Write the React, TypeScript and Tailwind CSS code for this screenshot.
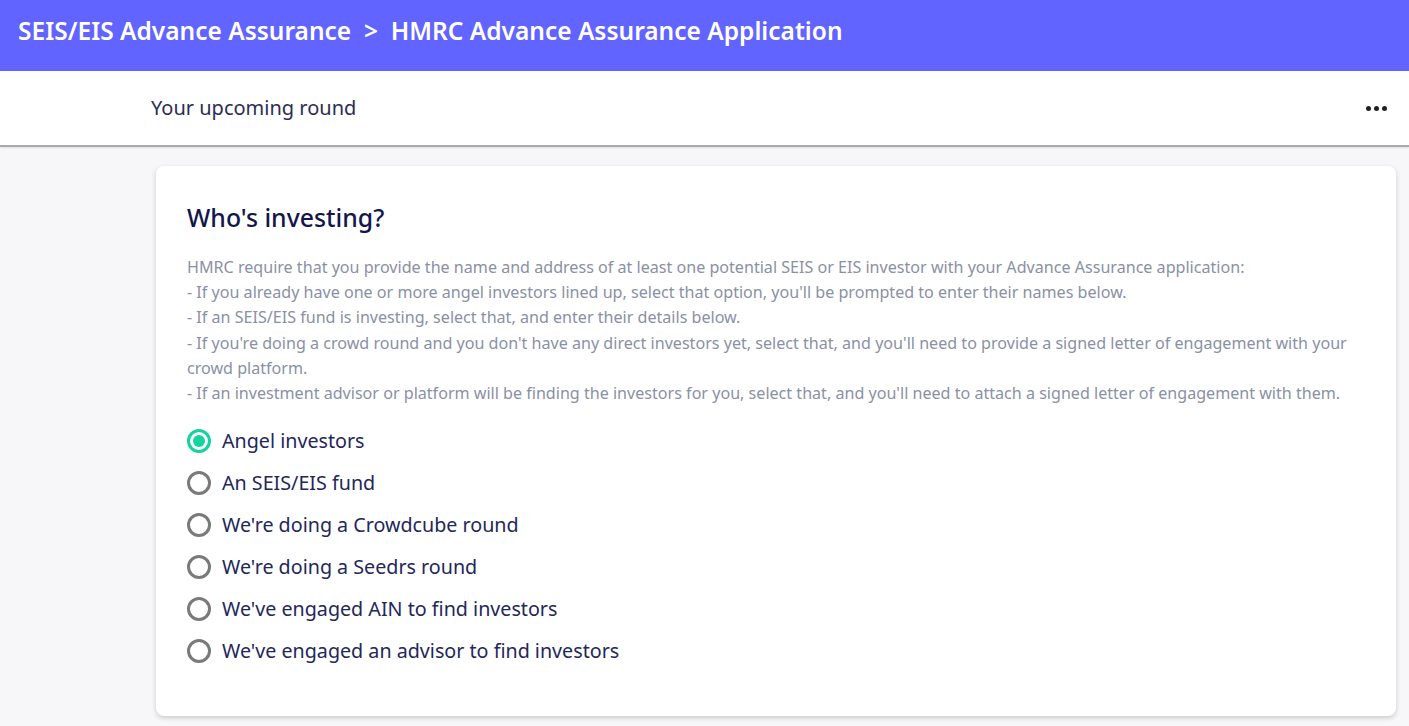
import React from "react";

const options = [
  "Angel investors",
  "An SEIS/EIS fund",
  "We're doing a Crowdcube round",
  "We're doing a Seedrs round",
  "We've engaged AIN to find investors",
  "We've engaged an advisor to find investors",
];

export default function App() {
  return (
    <div
      className="min-h-[726px] bg-[#f7f7f9] flex flex-col"
      style={{ fontFamily: '"Noto Sans", "Open Sans", sans-serif' }}
    >
      <header className="h-[71px] bg-[#6264ff] flex items-start pt-[12px] pl-[18px]">
        <h1 className="text-white text-[24.5px] leading-[38px] font-semibold">
          SEIS/EIS Advance Assurance &nbsp;&gt;&nbsp; HMRC Advance Assurance Application
        </h1>
      </header>
      <div className="h-[76px] bg-white flex items-center justify-between pl-[151px] pr-[22px] border-b-2 border-[#a9a9ab] shadow-[0_1px_2px_rgba(0,0,0,0.1)]">
        <span className="text-[20px] text-[#2b2e52]">Your upcoming round</span>
        <span className="flex gap-[3px]">
          <span className="w-[5px] h-[5px] rounded-full bg-[#222]" />
          <span className="w-[5px] h-[5px] rounded-full bg-[#222]" />
          <span className="w-[5px] h-[5px] rounded-full bg-[#222]" />
        </span>
      </div>
      <div className="pl-[156px] pr-[13px] pt-[19px]">
        <div className="bg-white rounded-[8px] shadow-[0_2px_5px_rgba(0,0,0,0.18)] px-[31px] pt-[33px] pb-[44px]">
          <h2 className="text-[24.8px] font-medium text-[#13164d] leading-[36px]">
            Who's investing?
          </h2>
          <div className="mt-[20px] text-[16.1px] leading-[25.2px] text-[#8a90a5]">
            <p>
              HMRC require that you provide the name and address of at least one potential SEIS or EIS investor with your Advance Assurance application:
            </p>
            <p>- If you already have one or more angel investors lined up, select that option, you'll be prompted to enter their names below.</p>
            <p>- If an SEIS/EIS fund is investing, select that, and enter their details below.</p>
            <p>
              - If you're doing a crowd round and you don't have any direct investors yet, select that, and you'll need to provide a signed letter of engagement with your crowd platform.
            </p>
            <p>
              - If an investment advisor or platform will be finding the investors for you, select that, and you'll need to attach a signed letter of engagement with them.
            </p>
          </div>
          <div className="mt-[14px] flex flex-col">
            {options.map((o, i) => (
              <label key={o} className="h-[42px] flex items-center gap-[11px]">
                {i === 0 ? (
                  <span className="w-[24px] h-[24px] rounded-full border-[3px] border-[#14d49e] flex items-center justify-center">
                    <span className="w-[12px] h-[12px] rounded-full bg-[#14d49e]" />
                  </span>
                ) : (
                  <span className="w-[24px] h-[24px] rounded-full border-[3px] border-[#7a7a7a]" />
                )}
                <span className="text-[19.7px] text-[#24275a]">{o}</span>
              </label>
            ))}
          </div>
        </div>
      </div>
    </div>
  );
}
